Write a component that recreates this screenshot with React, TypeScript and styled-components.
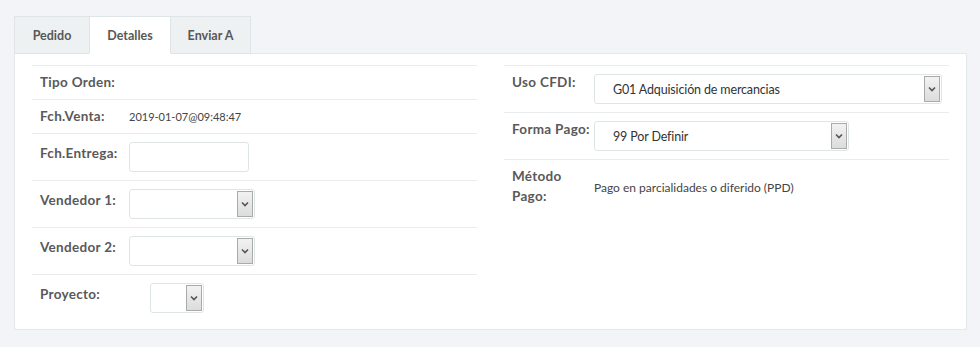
import styled, { createGlobalStyle } from "styled-components";

const GlobalStyle = createGlobalStyle`
  body {
    margin: 0;
    background: #f3f4f8;
    font-family: Lato, "Open Sans", sans-serif;
    font-size: 12px;
    color: #555;
  }
`;

const Page = styled.div`
  padding: 16px 13px 0 14px;
`;

const TabBar = styled.div`
  display: flex;
  height: 38px;
`;

const Tab = styled.div<{ $active?: boolean; $w: number }>`
  width: ${(p) => p.$w}px;
  box-sizing: border-box;
  display: flex;
  align-items: center;
  justify-content: center;
  font-size: 12.5px;
  font-weight: 700;
  color: #575757;
  background: ${(p) => (p.$active ? "#fff" : "#edf1f2")};
  border: 1px solid #dfe5e7;
  border-bottom: ${(p) => (p.$active ? "1px solid #fff" : "1px solid #dfe5e7")};
  margin-right: -1px;
  position: relative;
  z-index: ${(p) => (p.$active ? 2 : 1)};
`;

const Panel = styled.div`
  background: #fff;
  border: 1px solid #e3e8ea;
  border-radius: 0 0 3px 3px;
  box-shadow: 0 1px 1px rgba(0, 0, 0, 0.04);
  margin-top: -1px;
  padding: 11px 17px 8px;
  display: grid;
  grid-template-columns: 445px 445px;
  column-gap: 27px;
  align-items: start;
`;

const Table = styled.div`
  display: flex;
  flex-direction: column;
`;

const Row = styled.div<{ $labelW: number }>`
  display: grid;
  grid-template-columns: ${(p) => p.$labelW}px 1fr;
  border-top: 1px solid #e9ecee;
  padding: 8px 8px;
  line-height: 17px;
  min-height: 17px;
`;

const Label = styled.div<{ $drop?: number }>`
  font-weight: 700;
  font-size: 13.5px;
  letter-spacing: 0.3px;
  color: #595959;
  white-space: nowrap;
  padding-top: ${(p) => p.$drop ?? 0}px;
`;

const TallLabel = styled(Label)`
  line-height: 19.5px;
  margin-top: -1px;
`;

const Value = styled.div<{ $size?: number }>`
  color: #444;
  font-size: ${(p) => p.$size ?? 12}px;
  display: flex;
  align-items: center;
`;

const TextInput = styled.div<{ $w: number }>`
  width: ${(p) => p.$w}px;
  height: 30px;
  box-sizing: border-box;
  border: 1px solid #dfe5e7;
  border-radius: 3px;
  background: #fff;
`;

const SelectBox = styled.div<{ $w: number }>`
  width: ${(p) => p.$w}px;
  height: 30px;
  box-sizing: border-box;
  border: 1px solid #dfe5e7;
  border-radius: 3px;
  background: #fff;
  display: flex;
  align-items: stretch;
  padding: 1px;
`;

const SelectText = styled.div`
  flex: 1;
  display: flex;
  align-items: center;
  padding-left: 17px;
  font-size: 12.5px;
  letter-spacing: -0.15px;
  color: #333;
  white-space: nowrap;
  overflow: hidden;
`;

const Arrow = styled.div`
  width: 16px;
  box-sizing: border-box;
  border: 1px solid #aaa;
  background: linear-gradient(#f2f2f2, #dcdcdc);
  display: flex;
  align-items: center;
  justify-content: center;
`;

const Chevron = () => (
  <svg width="8" height="6" viewBox="0 0 8 6">
    <path d="M1 1.5 L4 4.5 L7 1.5" fill="none" stroke="#555" strokeWidth="1.6" />
  </svg>
);

const Select = ({ w, text }: { w: number; text?: string }) => (
  <SelectBox $w={w}>
    <SelectText>{text}</SelectText>
    <Arrow>
      <Chevron />
    </Arrow>
  </SelectBox>
);

const App = (): JSX.Element => {
  return (
    <Page>
      <GlobalStyle />
      <TabBar>
        <Tab $w={76}>Pedido</Tab>
        <Tab $w={82} $active>
          Detalles
        </Tab>
        <Tab $w={81}>Enviar A</Tab>
      </TabBar>
      <Panel>
        <Table>
          <Row $labelW={89}>
            <Label>Tipo Orden:</Label>
            <Value />
          </Row>
          <Row $labelW={89}>
            <Label>Fch.Venta:</Label>
            <Value $size={11}>2019-01-07@09:48:47</Value>
          </Row>
          <Row $labelW={89}>
            <Label $drop={3}>Fch.Entrega:</Label>
            <Value>
              <TextInput $w={120} />
            </Value>
          </Row>
          <Row $labelW={89}>
            <Label $drop={3}>Vendedor 1:</Label>
            <Value>
              <Select w={126} />
            </Value>
          </Row>
          <Row $labelW={89}>
            <Label $drop={3}>Vendedor 2:</Label>
            <Value>
              <Select w={126} />
            </Value>
          </Row>
          <Row $labelW={110}>
            <Label $drop={3}>Proyecto:</Label>
            <Value>
              <Select w={54} />
            </Value>
          </Row>
        </Table>
        <Table>
          <Row $labelW={82}>
            <Label>Uso CFDI:</Label>
            <Value>
              <Select w={348} text="G01 Adquisición de mercancias" />
            </Value>
          </Row>
          <Row $labelW={82}>
            <Label>Forma Pago:</Label>
            <Value>
              <Select w={255} text="99 Por Definir" />
            </Value>
          </Row>
          <Row $labelW={82}>
            <TallLabel>
              Método
              <br />
              Pago:
            </TallLabel>
            <Value>Pago en parcialidades o diferido (PPD)</Value>
          </Row>
        </Table>
      </Panel>
    </Page>
  );
};

export default App;
